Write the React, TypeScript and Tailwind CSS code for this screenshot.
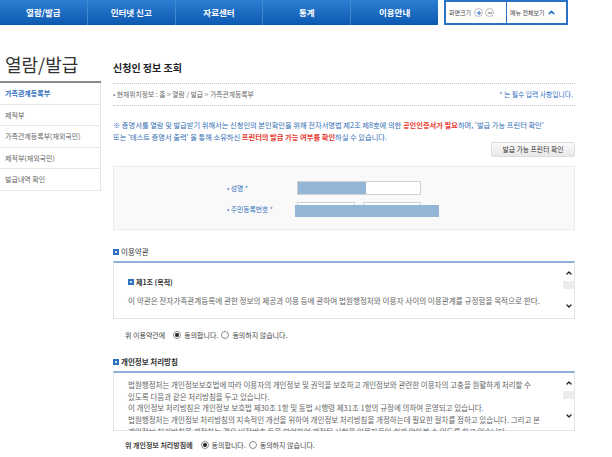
import React from 'react';
import { ChevronUp, ChevronDown, Plus, Minus } from 'lucide-react';

const navItems = ['열람/발급', '인터넷 신고', '자료센터', '통계', '이용안내'];
const sideMenu = ['가족관계등록부', '제적부', '가족관계등록부(재외국민)', '제적부(재외국민)', '발급내역 확인'];

const SectionIcon = () => (
  <span className="inline-flex w-[6px] h-[6px] bg-[#2f6fbf] items-center justify-center mr-[2px] shrink-0">
    <span className="w-[2px] h-[2px] bg-[#cfe0f5]" />
  </span>
);

const Radio = ({ checked }: { checked?: boolean }) => (
  <span className="inline-flex w-[8px] h-[8px] rounded-full border border-[#8a8a8a] bg-white items-center justify-center mx-[3px]">
    {checked && <span className="w-[4px] h-[4px] rounded-full bg-[#222]" />}
  </span>
);

const Scroller = () => (
  <div className="w-[11px] shrink-0 flex flex-col items-center">
    <ChevronUp className="mt-[6px] w-[8px] h-[8px] text-[#222]" strokeWidth={4} />
    <div className="mt-[4px] h-[8px] w-full bg-[#ececec]" />
    <ChevronDown className="mt-[13px] w-[8px] h-[8px] text-[#222]" strokeWidth={4} />
  </div>
);

const App: React.FC = () => {
  return (
    <div className="w-[612px] h-[457px] overflow-hidden bg-white text-[#333] font-['Noto_Sans_CJK_KR','Noto_Sans',sans-serif]">
      {/* top bar */}
      <header className="flex h-[26px]">
        <nav className="w-[438px] h-[25px] flex bg-gradient-to-b from-[#2c7ed2] to-[#0b59b1]">
          {navItems.map((n, i) => (
            <div
              key={n}
              className={`flex-1 flex items-center justify-center text-white text-[8.5px] font-bold ${i < 4 ? 'border-r border-[#4289d2]' : ''}`}
            >
              {n}
            </div>
          ))}
        </nav>
        <div className="ml-[6px] w-[124px] h-[25px] border-2 border-[#2a72c6] flex items-center bg-white">
          <div className="flex items-center pl-[3px] w-[61px] h-full border-r border-[#2a72c6]">
            <span className="text-[6px] text-[#444] mr-[3px]">화면크기</span>
            <span className="w-[9px] h-[9px] rounded-full border border-[#bbb] flex items-center justify-center">
              <Plus className="w-[6px] h-[6px] text-[#2a72c6]" strokeWidth={4} />
            </span>
            <span className="ml-[2px] w-[9px] h-[9px] rounded-full border border-[#bbb] flex items-center justify-center">
              <Minus className="w-[6px] h-[6px] text-[#666]" strokeWidth={4} />
            </span>
          </div>
          <div className="flex items-center pl-[3px]">
            <span className="text-[6px] text-[#444]">메뉴 전체보기</span>
            <ChevronUp className="ml-[3px] w-[9px] h-[9px] text-[#2a72c6]" strokeWidth={4} />
          </div>
        </div>
      </header>

      <div className="flex">
        {/* side menu */}
        <aside className="w-[101px] shrink-0">
          <div className="mt-[26px] h-[24px] leading-[24px] pl-[5px] text-[18px] text-[#333]">열람/발급</div>
          <div className="mt-[5px] border-t-2 border-[#8a8a8a]" />
          <ul className="border-r border-[#e6e6e6]">
            {sideMenu.map((m, i) => (
              <li
                key={m}
                className={`h-[21.5px] flex items-center pl-[5px] text-[7px] border-b border-[#e6e6e6] ${i === 0 ? 'text-[#2f6fbf] font-semibold' : 'text-[#666]'}`}
              >
                {m}
              </li>
            ))}
          </ul>
        </aside>

        {/* main */}
        <main className="ml-[12px] w-[462px] shrink-0">
          <h1 className="mt-[34px] h-[16px] leading-[16px] text-[10px] font-bold text-[#222]">신청인 정보 조회</h1>
          <div className="mt-[7px] border-t border-dotted border-[#c8c8c8]" />
          <div className="h-[22px] flex items-center justify-between text-[6.8px] border-b border-dotted border-[#c8c8c8]">
            <span className="text-[#666]">• 현재위치정보 : 홈 &gt; 열람 / 발급 &gt; 가족관계등록부</span>
            <span className="text-[#2f6fbf] mr-[2px]">* 는 필수 입력 사항입니다.</span>
          </div>

          <p className="mt-[13px] text-[7.25px] leading-[12px] text-[#2f6db5] whitespace-nowrap">
            ※ 증명서를 열람 및 발급받기 위해서는 신청인의 본인확인을 위해 전자서명법 제2조 제8호에 의한{' '}
            <span className="text-[#e8372e] font-bold">공인인증서가 필요</span>하며, '발급 가능 프린터 확인'
            <br />
            또는 '테스트 증명서 출력' 을 통해 소유하신{' '}
            <span className="text-[#e8372e] font-bold">프린터의 발급 가능 여부를 확인</span>하실 수 있습니다.
          </p>
          <div className="flex justify-end mt-[-1px]">
            <button className="h-[15px] w-[84px] rounded-[2px] border border-[#ddd] bg-gradient-to-b from-[#fbfbfb] to-[#e7e7e7] text-[6.8px] text-[#333]">
              발급 가능 프린터 확인
            </button>
          </div>

          {/* form */}
          <div className="relative mt-[9px] h-[64px] bg-[#f9f9f9] border border-[#ececec]">
            <div className="mt-[14px] h-[14px] flex items-center">
              <span className="pl-[113px] w-[183px] text-[6.8px] text-[#2f6fbf]">• 성명 *</span>
              <span className="relative w-[124px] h-[14px] border border-[#cfcfcf] bg-white">
                <span className="absolute left-0 top-0 bottom-0 w-[68px] bg-[#94b6d6]" />
              </span>
            </div>
            <div className="mt-[7px] h-[14px] flex items-center">
              <span className="pl-[113px] w-[183px] text-[6.8px] text-[#2f6fbf]">• 주민등록번호 *</span>
              <span className="w-[58px] h-[14px] border border-[#cfcfcf] bg-white" />
              <span className="ml-[8px] w-[58px] h-[14px] border border-[#cfcfcf] bg-white" />
            </div>
            <div className="absolute left-[181px] top-[38px] w-[144px] h-[12px] bg-[#94b6d6]" />
          </div>

          {/* terms */}
          <div className="mt-[14px] h-[16px] flex items-center text-[7.5px] text-[#333]">
            <SectionIcon />
            이용약관
          </div>
          <div className="mt-[1px] h-[58px] flex border-t-2 border-t-[#8fb2da] border-x border-b border-[#dfe6ee]">
            <div className="flex-1 pl-[14px] pt-[13px] overflow-hidden">
              <div className="h-[12px] flex items-center text-[7px] font-bold text-[#333]">
                <SectionIcon />
                제1조 (목적)
              </div>
              <p className="mt-[7px] h-[12px] leading-[12px] text-[7.6px] text-[#666] whitespace-nowrap">
                이 약관은 전자가족관계등록에 관한 정보의 제공과 이용 등에 관하여 법원행정처와 이용자 사이의 이용관계를 규정함을 목적으로 한다.
              </p>
            </div>
            <Scroller />
          </div>
          <div className="mt-[9px] h-[14px] pl-[12px] flex items-center text-[7px] text-[#444]">
            <span className="mr-[5px]">위 이용약관에</span>
            <Radio checked />
            <span>동의합니다.</span>
            <Radio />
            <span>동의하지 않습니다.</span>
          </div>

          {/* privacy */}
          <div className="mt-[12px] h-[16px] flex items-center text-[7.5px] font-bold text-[#333]">
            <SectionIcon />
            개인정보 처리방침
          </div>
          <div className="mt-[1px] h-[60px] flex border-t-2 border-t-[#8fb2da] border-x border-b border-[#dfe6ee]">
            <div className="flex-1 h-[58px] pl-[14px] pt-[6px] overflow-hidden text-[7.5px] leading-[11.7px] text-[#666] whitespace-nowrap">
              <p>법원행정처는 개인정보보호법에 따라 이용자의 개인정보 및 권익을 보호하고 개인정보와 관련한 이용자의 고충을 원활하게 처리할 수</p>
              <p>있도록 다음과 같은 처리방침을 두고 있습니다.</p>
              <p>이 개인정보 처리방침은 개인정보 보호법 제30조 1항 및 동법 시행령 제31조 1항의 규정에 의하여 운영되고 있습니다.</p>
              <p>법원행정처는 개인정보 처리방침의 지속적인 개선을 위하여 개인정보 처리방침을 개정하는데 필요한 절차를 정하고 있습니다. 그리고 본</p>
              <p>개인정보 처리방침을 개정하는 경우 버전번호 등을 부여하여 개정된 사항을 이용자들이 쉽게 알아볼 수 있도록 하고 있습니다.</p>
            </div>
            <Scroller />
          </div>
          <div className="mt-[7px] h-[14px] pl-[12px] flex items-center text-[7px] text-[#444]">
            <span className="mr-[5px] font-bold">위 개인정보 처리방침에</span>
            <Radio checked />
            <span>동의합니다.</span>
            <Radio />
            <span>동의하지 않습니다.</span>
          </div>
        </main>
      </div>
    </div>
  );
};

export default App;
